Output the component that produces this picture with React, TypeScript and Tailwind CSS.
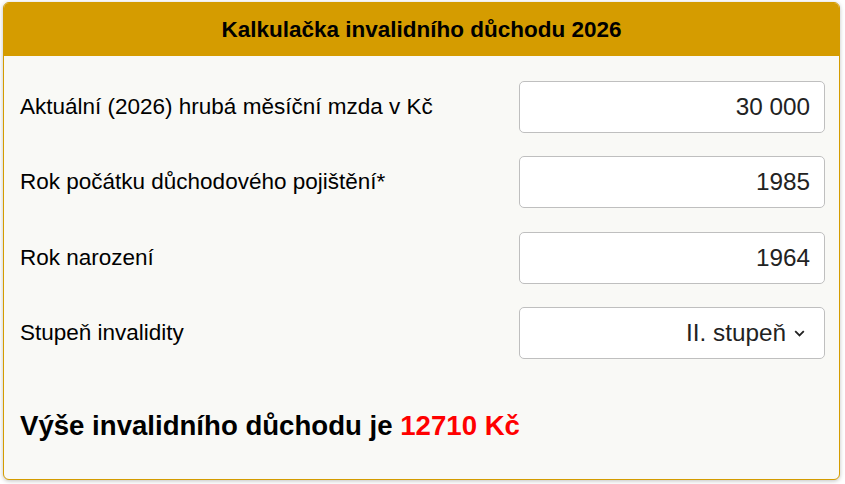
import { useState } from 'react';

const font = { fontFamily: '"Liberation Sans", Arial, sans-serif' };

function Field({ label, value }: { label: string; value: string }) {
  return (
    <div className="flex items-center justify-between h-[52px]">
      <label className="text-[22.5px] text-black">{label}</label>
      <input
        readOnly
        value={value}
        className="w-[306px] h-[52px] bg-white border border-[#bfbfbf] rounded-[5px] px-[14px] text-right text-[24.3px] text-[#222] outline-none"
        style={font}
      />
    </div>
  );
}

export default function App() {
  const [degree] = useState('II. stupeň');

  return (
    <div className="w-[845px] h-[484px] bg-white pt-[2px] pl-[3px]" style={font}>
      <div className="w-[837px] h-[478px] border border-[#d49c00] rounded-[6px] overflow-hidden bg-[#f9f9f6] shadow-[0_1px_4px_rgba(0,0,0,0.25)] flex flex-col">
        {/* Header */}
        <div className="h-[53px] bg-[#d59c00] flex items-center justify-center">
          <h1 className="text-[22.5px] font-bold text-black">Kalkulačka invalidního důchodu 2026</h1>
        </div>

        {/* Form */}
        <div className="pl-[16px] pr-[14px] pt-[25px] flex flex-col gap-[23.3px]">
          <Field label="Aktuální (2026) hrubá měsíční mzda v Kč" value="30 000" />
          <Field label="Rok počátku důchodového pojištění*" value="1985" />
          <Field label="Rok narození" value="1964" />
          <div className="flex items-center justify-between h-[52px]">
            <label className="text-[22.5px] text-black">Stupeň invalidity</label>
            <div className="w-[306px] h-[52px] bg-white border border-[#bfbfbf] rounded-[5px] pr-[19px] flex items-center justify-end gap-[8px] text-[24.3px] text-[#222]">
              <span>{degree}</span>
              <svg width="11" height="7" viewBox="0 0 11 7" fill="none" className="mt-[2px]">
                <path d="M1.2 1.2l4.3 4.3 4.3-4.3" stroke="#222" strokeWidth="1.8" />
              </svg>
            </div>
          </div>
        </div>

        {/* Result */}
        <div className="pl-[16px] mt-[50px] text-[27.6px] font-bold text-black leading-[33px]">
          Výše invalidního důchodu je <span className="text-[#ff0000]">12710 Kč</span>
        </div>
      </div>
    </div>
  );
}
